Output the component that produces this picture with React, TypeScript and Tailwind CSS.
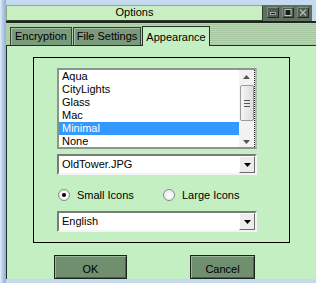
import React from 'react';

const skins = ['Aqua', 'CityLights', 'Glass', 'Mac', 'Minimal', 'None'];
const selectedSkin = 'Minimal';

// small black down-arrow used by the combo boxes
const ComboArrow = () => (
    <div className="w-[16px] h-full bg-[#ececec] border border-t-white border-l-white border-b-[#6b6b6b] border-r-[#6b6b6b] flex items-center justify-center">
        <svg width="7" height="4" viewBox="0 0 7 4">
            <path d="M0 0h7L3.5 4z" fill="#000" />
        </svg>
    </div>
);

const Combo = ({ value }: { value: string }) => (
    <div className="w-[200px] h-[21px] flex bg-white border-2 border-t-[#7a7a7a] border-l-[#7a7a7a] border-b-[#f4f4f4] border-r-[#f4f4f4]">
        <div className="flex-1 pl-[3px] leading-[17px]">{value}</div>
        <ComboArrow />
    </div>
);

const Radio = ({ checked, label }: { checked?: boolean; label: string }) => (
    <div className="flex items-center">
        <div className="w-[12px] h-[12px] rounded-full border border-[#8a8a8a] bg-[radial-gradient(circle_at_60%_60%,#ffffff,#e2e2e2)] flex items-center justify-center">
            {checked && <div className="w-[4px] h-[4px] rounded-full bg-black" />}
        </div>
        <span className="ml-[7px] leading-[14px]">{label}</span>
    </div>
);

const TitleButton = ({ kind }: { kind: 'min' | 'max' | 'close' }) => (
    <div className="w-[12px] h-[11px] bg-[#4e5f52] border border-[#7f8f7f] border-r-[#1e261e] border-b-[#1e261e] flex items-center justify-center">
        <svg width="8" height="7" viewBox="0 0 8 7">
            {kind === 'min' && <rect x="1.5" y="3.5" width="5" height="2" fill="#1a1a1a" stroke="#b8c4b8" strokeWidth="0.8" />}
            {kind === 'max' && <rect x="1" y="0.5" width="6" height="6" fill="#1a1a1a" stroke="#b8c4b8" strokeWidth="1" />}
            {kind === 'close' && <path d="M1 0.5l6 6M7 0.5l-6 6" stroke="#b8c4b8" strokeWidth="1.1" />}
        </svg>
    </div>
);

export default function App() {
    return (
        <div className="w-[316px] h-[283px] overflow-hidden flex flex-col pt-[5px] pl-[6px] pb-[4px] bg-[linear-gradient(90deg,#e2ecf7_0px,#b0c9e6_3px,#8fb0d6_6px,#c6daef_6px)] font-['Liberation_Sans',Arial,sans-serif] text-[11px] text-black">
            {/* title bar */}
            <div className="h-[16px] flex">
                <div className="flex-1 bg-[#c9eec1] border border-[#8faa88] border-r-[#2f3d2f] border-b-[#2f3d2f] text-center leading-[13px]">
                    Options
                </div>
                <div className="w-[49px] bg-[#5f705f] flex items-center gap-[3px] pl-[4px]">
                    <TitleButton kind="min" />
                    <TitleButton kind="max" />
                    <TitleButton kind="close" />
                </div>
                <div className="w-[4px]" />
            </div>
            <div className="h-[2px] bg-[#1c261c]" />

            {/* tab strip */}
            <div className="h-[23px] flex items-end pl-[4px] bg-[repeating-linear-gradient(0deg,#a7c7a0_0px,#a7c7a0_1px,#b8d6b0_1px,#b8d6b0_2px)]">
                <div className="w-[62px] h-[18px] whitespace-nowrap bg-[#7b997b] border border-b-0 border-[#344434] shadow-[inset_1px_1px_0_#a6c0a6] text-center leading-[17px]">
                    Encryption
                </div>
                <div className="w-[68px] h-[18px] ml-[1px] whitespace-nowrap bg-[#7b997b] border border-b-0 border-[#344434] shadow-[inset_1px_1px_0_#a6c0a6] text-center leading-[17px]">
                    File Settings
                </div>
                <div className="w-[68px] h-[20px] ml-[1px] -mb-px relative z-10 whitespace-nowrap bg-[#c3efc3] border border-b-0 border-[#243024] text-center leading-[21px]">
                    Appearance
                </div>
            </div>

            {/* page */}
            <div className="flex-1 bg-[#c3efc3] border-l border-t border-[#243024] flex flex-col">
                <div className="mt-[11px] ml-[26px] w-[257px] h-[186px] border border-black pt-[10px] pl-[23px]">
                    {/* skins list */}
                    <div className="w-[200px] h-[81px] flex border-2 border-[#8a968a] border-r-[#b0bcb0]">
                        <div className="flex-1 bg-white overflow-hidden">
                            {skins.map((s) => (
                                <div
                                    key={s}
                                    className={
                                        s === selectedSkin
                                            ? 'h-[13px] leading-[13px] pl-[3px] bg-[#3399ff] text-white'
                                            : 'h-[13px] leading-[13px] pl-[3px]'
                                    }
                                >
                                    {s}
                                </div>
                            ))}
                        </div>
                        <div className="w-[16px] bg-[#f2f2f2] border-r border-dotted border-[#222] flex flex-col items-center">
                            <svg className="mt-[5px]" width="7" height="4" viewBox="0 0 7 4">
                                <path d="M3.5 0L7 4H0z" fill="#555" />
                            </svg>
                            <div className="mt-[6px] w-[14px] h-[36px] rounded-[2px] border border-[#9a9a9a] bg-[linear-gradient(90deg,#f6f6f6,#dcdcdc)] flex flex-col items-center justify-center gap-[2px]">
                                <div className="w-[6px] h-px bg-[#555]" />
                                <div className="w-[6px] h-px bg-[#555]" />
                                <div className="w-[6px] h-px bg-[#555]" />
                            </div>
                            <svg className="mt-auto mb-[3px]" width="7" height="4" viewBox="0 0 7 4">
                                <path d="M0 0h7L3.5 4z" fill="#555" />
                            </svg>
                        </div>
                    </div>

                    <div className="mt-[5px]">
                        <Combo value="OldTower.JPG" />
                    </div>

                    <div className="mt-[12px] h-[16px] flex items-center pl-[1px]">
                        <div className="w-[105px]">
                            <Radio checked label="Small Icons" />
                        </div>
                        <Radio label="Large Icons" />
                    </div>

                    <div className="mt-[8px]">
                        <Combo value="English" />
                    </div>
                </div>

                {/* dialog buttons */}
                <div className="mt-[12px] flex pl-[47px]">
                    <div className="w-[73px] h-[24px] bg-[#6f8f6f] border border-[#1a241a] shadow-[inset_1px_1px_0_#9ab49a,inset_-1px_-1px_0_#4a5f4a] text-center pt-[5px]">
                        OK
                    </div>
                    <div className="w-[65px] h-[24px] ml-[63px] bg-[#6f8f6f] border border-[#1a241a] shadow-[inset_1px_1px_0_#9ab49a,inset_-1px_-1px_0_#4a5f4a] text-center pt-[5px]">
                        Cancel
                    </div>
                </div>
            </div>
        </div>
    );
}
